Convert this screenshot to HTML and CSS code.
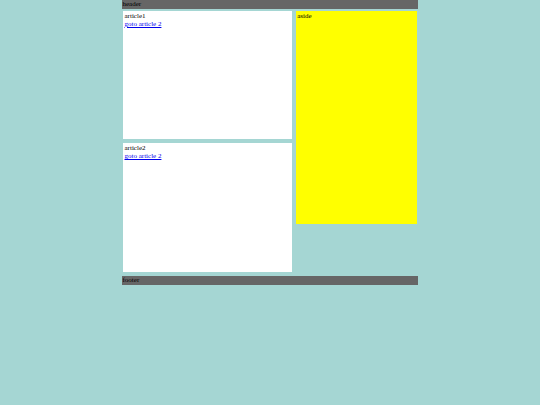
FILE: index.html
```html
<!DOCTYPE html>
<html>
<head>
<meta charset="utf-8">
<link rel="stylesheet" href="styles.css">
</head>
<body>
<div class="page">
  <header class="header">header</header>
  <div class="main">
    <div class="articles">
      <article class="article">article1<br><a href="#a2">goto article 2</a></article>
      <article class="article" id="a2">article2<br><a href="#a2">goto article 2</a></article>
    </div>
    <aside class="aside">aside</aside>
  </div>
  <footer class="footer">footer</footer>
</div>
</body>
</html>
```

FILE: styles.css
```css
html, body {
  margin: 0;
  padding: 0;
  background: #a5d6d3;
}
body {
  font-family: "Liberation Serif", "Times New Roman", serif;
  font-size: 7px;
  line-height: 8px;
  color: #000;
}
.page {
  width: 296px;
  margin: 0 auto;
}
.header, .footer {
  background: #666666;
  height: 8.5px;
  line-height: 8.5px;
  padding-left: 0.5px;
}
.footer {
  height: 9.5px;
  line-height: 9.5px;
}
.main {
  display: flex;
  align-items: flex-start;
  gap: 4px;
  margin: 2.5px 0 4px;
  padding-left: 1px;
}
.articles {
  display: flex;
  flex-direction: column;
  gap: 4px;
  width: 168.7px;
}
.article {
  display: block;
  background: #fff;
  height: 128.4px;
  padding: 1px 1.5px;
  box-sizing: border-box;
}
.article a {
  color: #0000ee;
}
.aside {
  background: #ffff00;
  width: 121px;
  height: 213px;
  padding: 1px 1.5px;
  box-sizing: border-box;
}
```
